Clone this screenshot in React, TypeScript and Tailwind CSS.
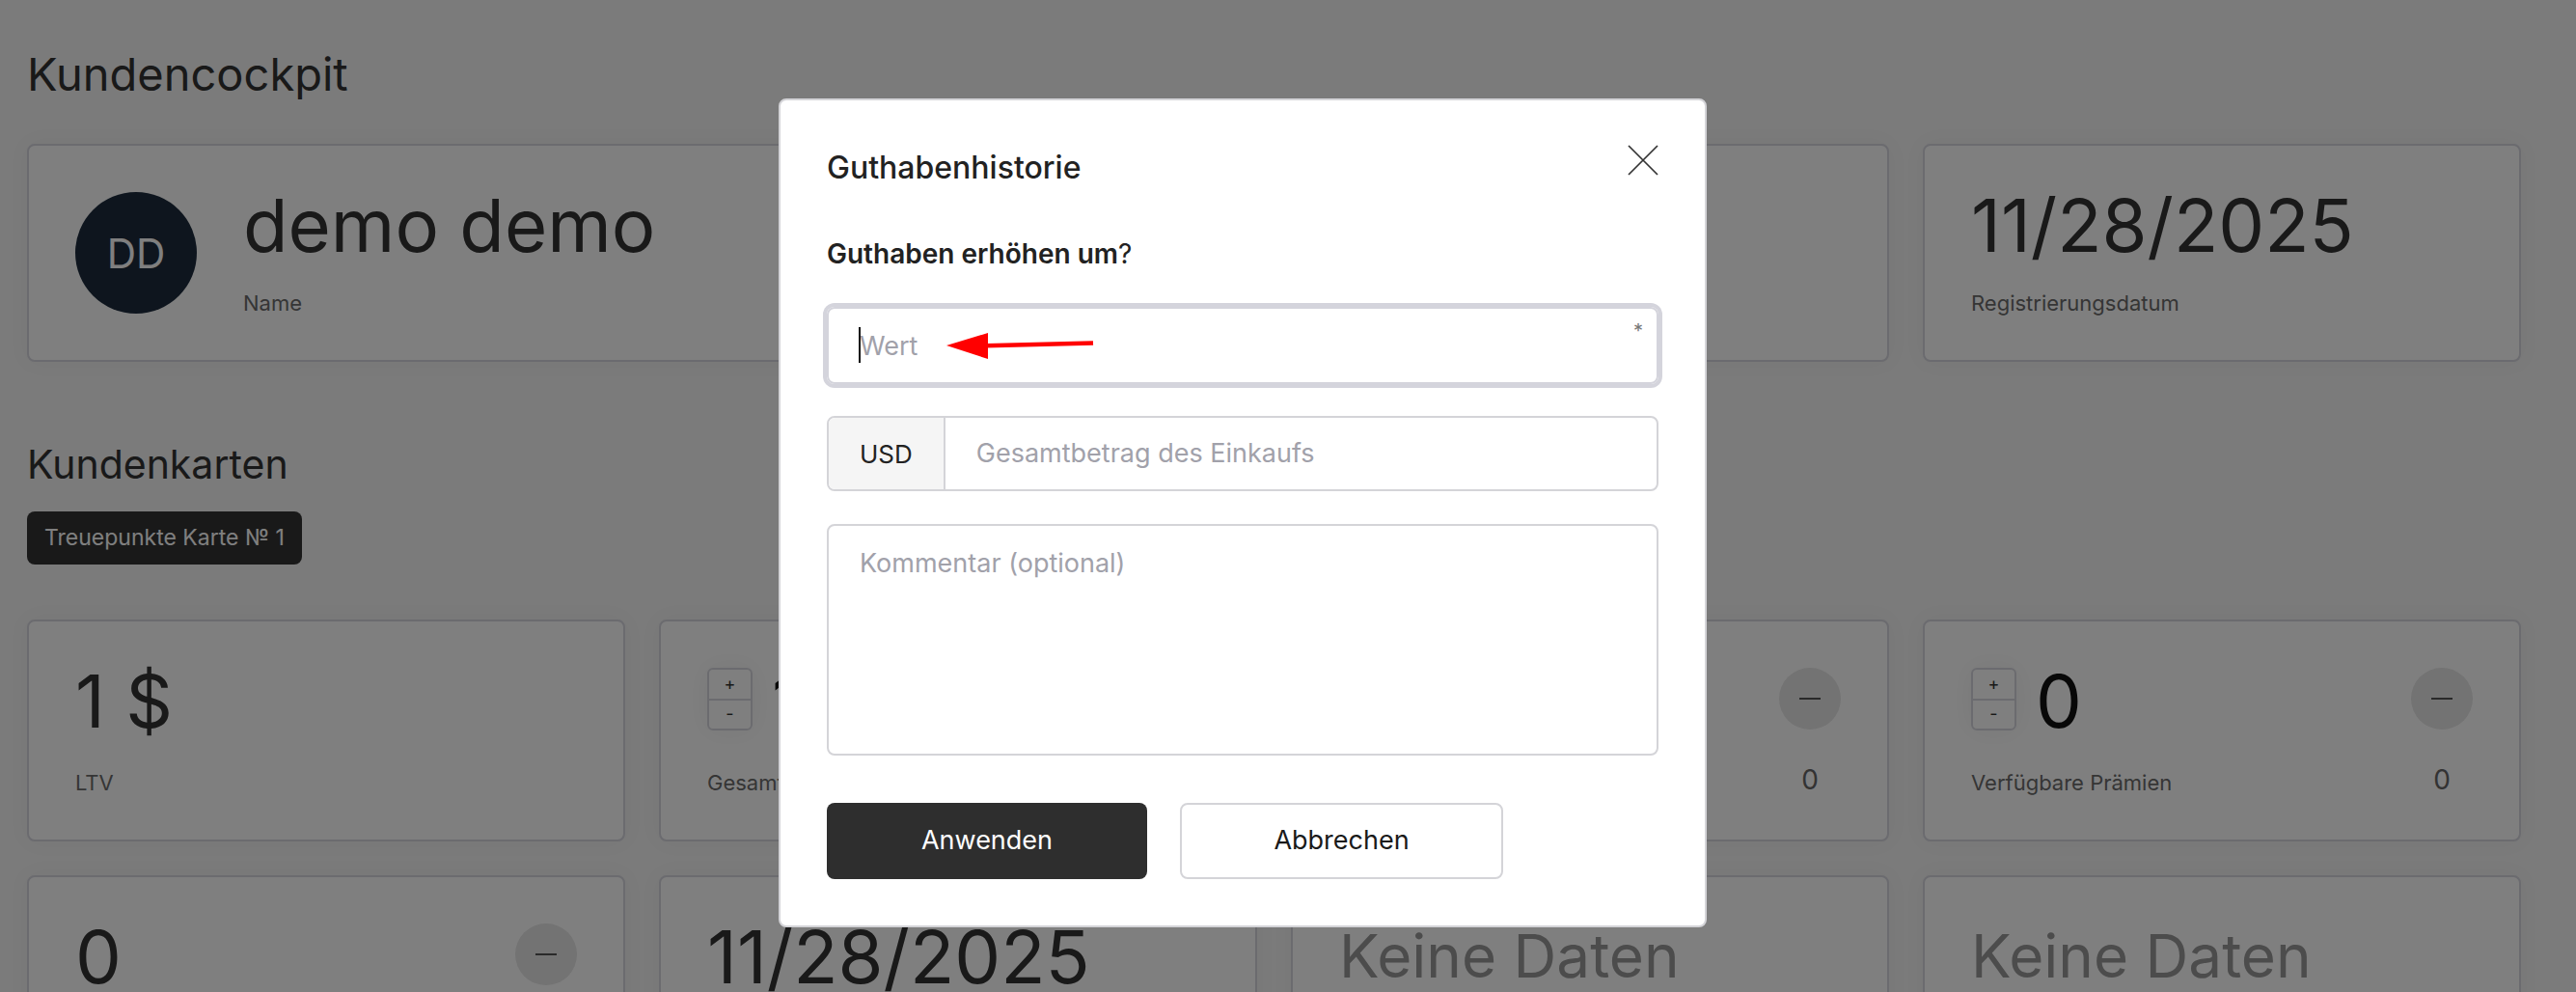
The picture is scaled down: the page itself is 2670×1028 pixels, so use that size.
import React from "react";

type StatProps = {
  value: string;
  label: string;
  stepper?: boolean;
  counter?: string;
  tone?: string;
  small?: boolean;
};

const Stepper = () => (
  <div className="flex h-[65px] w-[47px] shrink-0 flex-col rounded-md border-2 border-[#d6d6de] text-[18px] leading-none text-[#333] shadow-[0_0_28px_rgba(0,0,0,0.06)]">
    <button className="flex flex-1 items-center justify-center border-b-2 border-[#d6d6de]">+</button>
    <button className="flex flex-1 items-center justify-center">-</button>
  </div>
);

const RoundButton = () => (
  <button className="flex h-16 w-16 shrink-0 items-center justify-center rounded-full bg-[#e6e6e6]">
    <span className="block h-[2px] w-[22px] bg-[#555]" />
  </button>
);

const TopCard = ({ value, label }: { value: string; label: string }) => (
  <div className="rounded-lg border-2 border-[#d6d6de] bg-white p-12 shadow-[0_0_24px_rgba(0,0,0,0.04)]">
    <div className="text-[76px] leading-[68px] text-[#333]">{value}</div>
    <div className="mt-9 text-[22px] leading-none text-[#6b6b6b]">{label}</div>
  </div>
);

const NameCard = () => (
  <div className="col-span-2 flex items-center gap-12 rounded-lg border-2 border-[#d6d6de] bg-white p-12 shadow-[0_0_24px_rgba(0,0,0,0.04)]">
    <div className="flex h-[126px] w-[126px] shrink-0 items-center justify-center rounded-full bg-[#1c2b3d] text-[42px] text-white">
      DD
    </div>
    <div>
      <div className="text-[76px] leading-[68px] text-[#333]">demo demo</div>
      <div className="mt-9 text-[22px] leading-none text-[#6b6b6b]">Name</div>
    </div>
  </div>
);

const StatCard = ({ value, label, stepper, counter, tone = "text-[#333]", small }: StatProps) => (
  <div className="rounded-lg border-2 border-[#d6d6de] bg-white p-12 shadow-[0_0_24px_rgba(0,0,0,0.04)]">
    <div className="flex items-start justify-between">
      <div className="flex items-start gap-5">
        {stepper && <Stepper />}
        <span className={`${small ? "text-[62px]" : "text-[76px]"} leading-[68px] ${tone}`}>{value}</span>
      </div>
      {counter !== undefined && <RoundButton />}
    </div>
    <div className="mt-[34px] flex h-7 items-end justify-between">
      <span className="text-[22px] leading-none text-[#6b6b6b]">{label}</span>
      {counter !== undefined && (
        <span className="w-16 text-center text-[28px] leading-none text-[#666]">{counter}</span>
      )}
    </div>
  </div>
);

const Modal = () => (
  <div className="fixed inset-0 flex items-start justify-center bg-black/50 pt-[102px] pr-[94px]">
    <div className="w-[962px] rounded-lg border-2 border-zinc-300 bg-white px-12 pt-[46px] pb-12">
      <div className="flex items-start justify-between">
        <h2 className="text-[32px] leading-[48px] font-medium text-[#222]">Guthabenhistorie</h2>
        <button className="h-8 w-8">
          <svg viewBox="0 0 32 32" className="h-8 w-8" fill="none">
            <path d="M1 1 31 31M31 1 1 31" stroke="#333" strokeWidth="1.75" />
          </svg>
        </button>
      </div>

      <p className="mt-[45px] text-[28px] leading-[40px] text-[#222]">
        <span className="font-semibold">Guthaben erhöhen um</span>?
      </p>

      <div className="relative mt-[35px] h-20 rounded-lg border-2 border-[#d4d4dc] ring-4 ring-[#d4d4dc]">
        <input
          className="h-full w-full bg-transparent px-8 text-[27px] text-[#222] outline-none placeholder:text-[#a1a1aa]"
          placeholder="Wert"
        />
        <span className="absolute left-[31px] top-[19px] h-[37px] w-[2px] bg-[#111]" />
        <span className="absolute right-[14px] top-[8px] text-[20px] text-[#777]">*</span>
        <svg className="absolute left-[118px] top-[18px] h-[40px] w-[160px]" viewBox="0 0 160 40">
          <path d="M45 20.2 156 17.4" stroke="#ff0000" strokeWidth="4.5" />
          <path d="M4 20 47 7 47 34Z" fill="#ff0000" />
        </svg>
      </div>

      <div className="mt-[33px] flex h-[78px] overflow-hidden rounded-lg border-2 border-zinc-300">
        <span className="flex items-center border-r-2 border-zinc-300 bg-[#f5f5f5] px-8 text-[26px] text-[#222]">USD</span>
        <input
          className="flex-1 px-8 text-[27px] text-[#222] outline-none placeholder:text-[#a1a1aa]"
          placeholder="Gesamtbetrag des Einkaufs"
        />
      </div>

      <textarea
        className="mt-[34px] block h-[240px] w-full resize-none rounded-lg border-2 border-zinc-300 px-8 pt-[19px] text-[27px] leading-[40px] outline-none placeholder:text-[#a1a1aa]"
        placeholder="Kommentar (optional)"
      />

      <div className="mt-[49px] flex gap-[34px]">
        <button className="h-[79px] w-[332px] rounded-lg bg-[#2e2e2e] text-[27px] text-white">Anwenden</button>
        <button className="h-[79px] w-[335px] rounded-lg border-2 border-zinc-300 bg-white text-[27px] text-[#1a1a1a]">
          Abbrechen
        </button>
      </div>
    </div>
  </div>
);

const App = () => {
  return (
    <div className="relative h-screen overflow-hidden bg-[#f6f6f6] font-['Inter',sans-serif]">
      <main className="pl-7 pr-[57px] pt-[53px]">
        <h1 className="text-[47px] leading-none text-[#333]">Kundencockpit</h1>

        <div className="mt-[49px] grid grid-cols-4 gap-[35px]">
          <NameCard />
          <TopCard value="0" label="Besuche" />
          <TopCard value="11/28/2025" label="Registrierungsdatum" />
        </div>

        <h2 className="mt-[86px] text-[41px] leading-none text-[#333]">Kundenkarten</h2>
        <div className="mt-[28px]">
          <button className="h-[55px] rounded-lg bg-[#333] px-[18px] text-[23px] text-white">Treuepunkte Karte № 1</button>
        </div>

        <div className="mt-[57px] grid grid-cols-4 gap-[35px]">
          <StatCard value="1 $" label="LTV" />
          <StatCard value="1" label="Gesamtpunkte" stepper tone="text-[#111]" />
          <StatCard value="0" label="Eingelöste Prämien" stepper counter="0" tone="text-[#111]" />
          <StatCard value="0" label="Verfügbare Prämien" stepper counter="0" tone="text-[#111]" />
          <StatCard value="0" label="Besuche gesamt" counter="0" />
          <StatCard value="11/28/2025" label="Letzter Besuch" />
          <StatCard value="Keine Daten" label="Lieblingsfiliale" tone="text-[#999]" small />
          <StatCard value="Keine Daten" label="Letzte Prämie" tone="text-[#999]" small />
        </div>
      </main>
      <Modal />
    </div>
  );
};

export default App;
